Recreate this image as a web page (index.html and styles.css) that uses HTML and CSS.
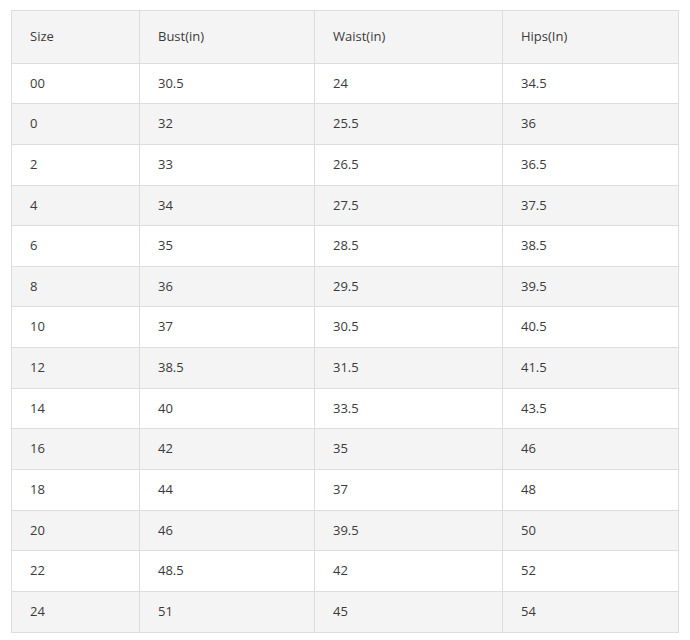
FILE: index.html
```html
<!DOCTYPE html>
<html>
<head>
<meta charset="utf-8">
<link rel="stylesheet" href="styles.css">
</head>
<body>
<table class="size-table">
<colgroup>
<col class="c1"><col class="c2"><col class="c3"><col class="c4">
</colgroup>
<thead>
<tr><th>Size</th><th>Bust(in)</th><th>Waist(in)</th><th>Hips(In)</th></tr>
</thead>
<tbody>
<tr><td>00</td><td>30.5</td><td>24</td><td>34.5</td></tr>
<tr><td>0</td><td>32</td><td>25.5</td><td>36</td></tr>
<tr><td>2</td><td>33</td><td>26.5</td><td>36.5</td></tr>
<tr><td>4</td><td>34</td><td>27.5</td><td>37.5</td></tr>
<tr><td>6</td><td>35</td><td>28.5</td><td>38.5</td></tr>
<tr><td>8</td><td>36</td><td>29.5</td><td>39.5</td></tr>
<tr><td>10</td><td>37</td><td>30.5</td><td>40.5</td></tr>
<tr><td>12</td><td>38.5</td><td>31.5</td><td>41.5</td></tr>
<tr><td>14</td><td>40</td><td>33.5</td><td>43.5</td></tr>
<tr><td>16</td><td>42</td><td>35</td><td>46</td></tr>
<tr><td>18</td><td>44</td><td>37</td><td>48</td></tr>
<tr><td>20</td><td>46</td><td>39.5</td><td>50</td></tr>
<tr><td>22</td><td>48.5</td><td>42</td><td>52</td></tr>
<tr><td>24</td><td>51</td><td>45</td><td>54</td></tr>
</tbody>
</table>
</body>
</html>
```
FILE: styles.css
```css
html, body {
  margin: 0;
  padding: 0;
  background: #fff;
}
body {
  padding: 10px 0 0 11px;
  font-family: "Open Sans", "Liberation Sans", sans-serif;
  font-size: 13px;
  color: #3a3a3a;
}
.size-table {
  border-collapse: collapse;
  width: 667px;
  table-layout: fixed;
}
.c1 { width: 128px; }
.c2 { width: 175px; }
.c3 { width: 188px; }
.c4 { width: 176px; }
.size-table th,
.size-table td {
  border: 1px solid #dddddd;
  text-align: left;
  padding: 11px 18px;
  line-height: 17.64px;
  font-weight: normal;
}
.size-table th {
  padding-top: 17px;
  padding-bottom: 17px;
  background: #f4f4f4;
}
.size-table tbody tr:nth-child(even) td {
  background: #f4f4f4;
}
```
